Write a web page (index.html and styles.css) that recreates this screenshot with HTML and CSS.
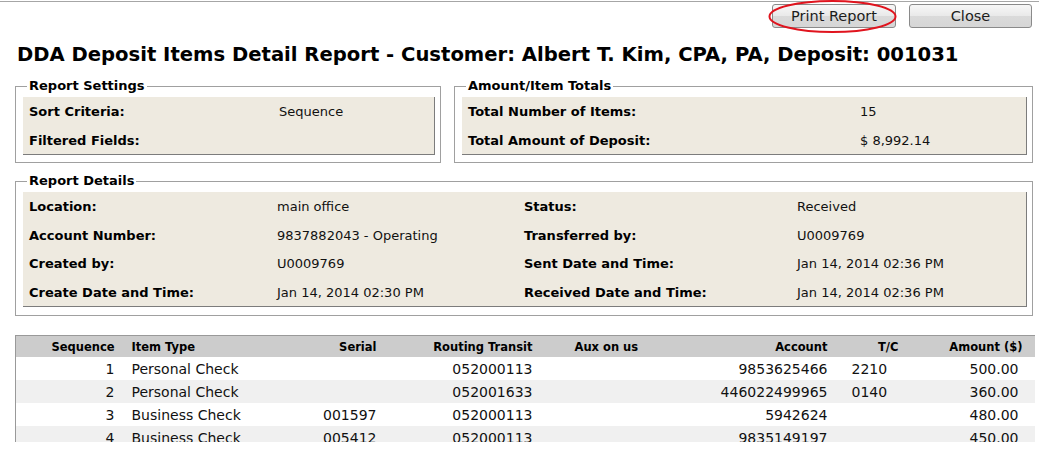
FILE: index.html
```html
<!DOCTYPE html>
<html>
<head>
<meta charset="utf-8">
<title>DDA Deposit Items Detail Report</title>
<link rel="stylesheet" href="styles.css">
</head>
<body>
<div class="topline"></div>
<div class="toolbar">
  <div class="btn-wrap">
    <button class="btn btn-print">Print Report</button>
    <svg class="circle-mark" width="130" height="34" viewBox="0 0 130 34"><ellipse cx="64.5" cy="16.5" rx="63" ry="15.5" fill="none" stroke="#e0141e" stroke-width="2"/></svg>
  </div>
  <button class="btn btn-close">Close</button>
</div>
<h1 class="title">DDA Deposit Items Detail Report - Customer: Albert T. Kim, CPA, PA, Deposit: 001031</h1>
<div class="content">
  <div class="top-row">
    <fieldset class="group group-settings">
      <legend>Report Settings</legend>
      <div class="panel grid-settings">
        <div class="lbl">Sort Criteria:</div><div class="val">Sequence</div>
        <div class="lbl">Filtered Fields:</div><div class="val"></div>
      </div>
    </fieldset>
    <fieldset class="group group-totals">
      <legend>Amount/Item Totals</legend>
      <div class="panel grid-totals">
        <div class="lbl">Total Number of Items:</div><div class="val">15</div>
        <div class="lbl">Total Amount of Deposit:</div><div class="val">$ 8,992.14</div>
      </div>
    </fieldset>
  </div>
  <fieldset class="group group-details">
    <legend>Report Details</legend>
    <div class="panel grid-details">
      <div class="lbl">Location:</div><div class="val">main office</div>
      <div class="lbl">Status:</div><div class="val">Received</div>
      <div class="lbl">Account Number:</div><div class="val">9837882043 - Operating</div>
      <div class="lbl">Transferred by:</div><div class="val">U0009769</div>
      <div class="lbl">Created by:</div><div class="val">U0009769</div>
      <div class="lbl">Sent Date and Time:</div><div class="val">Jan 14, 2014 02:36 PM</div>
      <div class="lbl">Create Date and Time:</div><div class="val">Jan 14, 2014 02:30 PM</div>
      <div class="lbl">Received Date and Time:</div><div class="val">Jan 14, 2014 02:36 PM</div>
    </div>
  </fieldset>
  <div class="items-scroll">
    <table class="items">
      <colgroup>
        <col class="c-seq"><col class="c-type"><col class="c-serial"><col class="c-rt"><col class="c-aux"><col class="c-acct"><col class="c-tc"><col class="c-amt">
      </colgroup>
      <thead>
        <tr>
          <th class="r seq">Sequence</th>
          <th class="l type">Item Type</th>
          <th class="r">Serial</th>
          <th class="r">Routing Transit</th>
          <th class="l aux">Aux on us</th>
          <th class="r">Account</th>
          <th class="r tc-h">T/C</th>
          <th class="r amt-h">Amount ($)</th>
        </tr>
      </thead>
      <tbody>
        <tr><td class="r seq">1</td><td class="l type">Personal Check</td><td class="r"></td><td class="r">052000113</td><td class="l aux"></td><td class="r">9853625466</td><td class="l tc">2210</td><td class="r amt">500.00</td></tr>
        <tr class="alt"><td class="r seq">2</td><td class="l type">Personal Check</td><td class="r"></td><td class="r">052001633</td><td class="l aux"></td><td class="r">446022499965</td><td class="l tc">0140</td><td class="r amt">360.00</td></tr>
        <tr><td class="r seq">3</td><td class="l type">Business Check</td><td class="r">001597</td><td class="r">052000113</td><td class="l aux"></td><td class="r">5942624</td><td class="l tc"></td><td class="r amt">480.00</td></tr>
        <tr class="alt"><td class="r seq">4</td><td class="l type">Business Check</td><td class="r">005412</td><td class="r">052000113</td><td class="l aux"></td><td class="r">9835149197</td><td class="l tc"></td><td class="r amt">450.00</td></tr>
      </tbody>
    </table>
  </div>
</div>
</body>
</html>
```

FILE: styles.css
```css
html, body {
  margin: 0;
  padding: 0;
  background: #ffffff;
}
body {
  font-family: "DejaVu Sans", Verdana, sans-serif;
  color: #000;
}
.topline {
  margin-top: 1px;
  border-top: 1px solid #a6a6a6;
}
.toolbar {
  display: flex;
  justify-content: flex-end;
  gap: 13px;
  padding: 2px 7px 0 0;
}
.btn-wrap {
  position: relative;
  display: flex;
}
.btn {
  height: 24px;
  border: 1px solid #8a8a8a;
  border-radius: 3px;
  background: linear-gradient(#f7f7f7, #e9e9e9 50%, #dadada 51%, #d6d6d6);
  font-family: "DejaVu Sans", Verdana, sans-serif;
  font-size: 14.5px;
  color: #1c1c1c;
  padding: 0;
  line-height: 22px;
}
.btn-print { width: 124px; }
.btn-close { width: 123px; }
.circle-mark {
  position: absolute;
  left: -4px;
  top: -4px;
  pointer-events: none;
}
.title {
  margin: 15px 0 0 17px;
  font-size: 19.6px;
  line-height: 24px;
  font-weight: bold;
  white-space: nowrap;
}
.content {
  padding-left: 15px;
  width: 1018px;
}
.top-row {
  display: flex;
  gap: 13px;
  margin-top: 11px;
}
.group {
  margin: 0;
  border: 1px solid #a0a0a0;
  padding: 0 5px 7px 7px;
  min-width: 0;
}
.group legend {
  font-size: 13px;
  font-weight: bold;
  line-height: 16px;
  padding: 0 2px;
  margin-left: 4px;
}
.group-settings { width: 426px; box-sizing: border-box; }
.group-totals { width: 579px; box-sizing: border-box; }
.group-details {
  box-sizing: border-box;
  width: 1018px;
  margin-top: 10px;
  padding-bottom: 8px;
}
.panel {
  margin-top: 3px;
  background: #eeeae0;
  border-right: 1px solid #7c7c7c;
  border-bottom: 1px solid #7c7c7c;
  display: grid;
  grid-auto-rows: 28px;
  padding-left: 6px;
  font-size: 13px;
  align-items: center;
}
.grid-settings { grid-template-columns: 250px 1fr; grid-template-rows: 29px 28px; }
.grid-totals { grid-template-columns: 392px 1fr; grid-template-rows: 29px 28px; }
.grid-details {
  grid-template-columns: 248px 247px 273px 1fr;
  grid-template-rows: 29px 28px 29px 28px;
}
.lbl { font-weight: bold; white-space: nowrap; }
.val { color: #111; white-space: nowrap; }

.items-scroll {
  margin-top: 19px;
  height: 107px;
  width: 1020px;
  overflow: hidden;
}
.items {
  border-collapse: collapse;
  table-layout: fixed;
  width: 1020px;
  border-top: 1px solid #999;
  border-left: 1px solid #999;
}
.c-seq { width: 104px; }
.c-type { width: 160px; }
.c-serial { width: 102px; }
.c-rt { width: 156px; }
.c-aux { width: 102px; }
.c-acct { width: 193px; }
.c-tc { width: 72px; }
.c-amt { width: 131px; }
.items th {
  background: #cccccc;
  font-size: 11.5px;
  font-weight: bold;
  height: 21px;
  padding: 0 5px;
  white-space: nowrap;
}
.items td {
  font-size: 14px;
  height: 23px;
  padding: 0 5px;
  white-space: nowrap;
  color: #111;
}
.items tr.alt td { background: #f0f0f0; }
.items .r { text-align: right; }
.items .l { text-align: left; }
.items .type { padding-left: 12px; }
.items .aux { padding-left: 37px; }
.items .tc { padding-left: 19px; }
.items .tc-h { padding-right: 6px; }
.items .amt-h { padding-right: 13px; }
.items .amt { padding-right: 17px; }
```
